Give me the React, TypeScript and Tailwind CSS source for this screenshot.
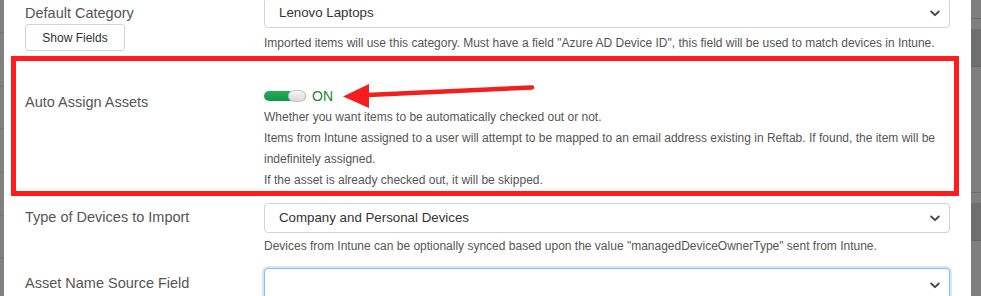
import React from "react";

const Chevron = () => (
  <svg width="10" height="7" viewBox="0 0 10 7" className="shrink-0">
    <path d="M1.2 1.5 L5 5.2 L8.8 1.5" fill="none" stroke="#444" strokeWidth="1.8" strokeLinecap="round" strokeLinejoin="round" />
  </svg>
);

const Select = ({ value, focus, className = "" }: { value: string; focus?: boolean; className?: string }) => (
  <div
    className={
      "flex items-center justify-between h-[30px] rounded-[4px] bg-white pl-[14px] pr-[9px] " +
      (focus
        ? "border border-[#80bdff] shadow-[0_0_0_2px_rgba(128,189,255,0.35)] "
        : "border border-[#cfd4da] ") +
      className
    }
  >
    <span className="text-[13.3px] text-[#333]">{value}</span>
    <Chevron />
  </div>
);

export default function App() {
  return (
    <div
      className="relative w-[981px] h-[296px] overflow-hidden bg-white flex"
      style={{ fontFamily: '"Liberation Sans", Arial, sans-serif' }}
    >
      {/* left overlay strip */}
      <div className="w-[4px] h-full bg-[#808080] flex flex-col shrink-0">
        <div className="h-[32px]" />
        <div className="h-[1px] bg-[#777]" />
        <div className="h-[52px]" />
        <div className="h-[1px] bg-[#777]" />
        <div className="h-[42px]" />
        <div className="h-[1px] bg-[#777]" />
        <div className="h-[43px]" />
        <div className="h-[1px] bg-[#777]" />
        <div className="h-[42px]" />
        <div className="h-[1px] bg-[#777]" />
        <div className="h-[42px]" />
        <div className="h-[1px] bg-[#777]" />
      </div>

      {/* modal body */}
      <div className="w-[967px] shrink-0 px-[21px] flex flex-col">
        {/* Row 1 */}
        <div className="flex mt-[-2px]">
          <div className="w-[239px] shrink-0 flex flex-col">
            <div className="text-[14.5px] text-[#555] h-[26px] flex items-center pt-[6px]">Default Category</div>
            <div className="mt-[0px] w-[100px] h-[27px] border border-[#d5d5d5] rounded-[3px] flex items-center justify-center text-[12px] text-[#333]">
              Show Fields
            </div>
          </div>
          <div className="flex-1 flex flex-col">
            <Select value="Lenovo Laptops" />
            <div className="text-[12px] text-[#555] mt-[8px] leading-[14px]">
              Imported items will use this category. Must have a field "Azure AD Device ID", this field will be used to match devices in Intune.
            </div>
          </div>
        </div>

        {/* Red box row */}
        <div className="relative ml-[-14px] mr-[-9px] mt-[5px] h-[140px] border-[5px] border-[#ff1c1c] pl-[9px] pr-[4px] flex">
          <div className="w-[239px] shrink-0 text-[14.5px] text-[#555] pt-[31px]">Auto Assign Assets</div>
          <div className="flex-1 flex flex-col pt-[29px]">
            <div className="flex items-center h-[12px]">
              <div className="relative w-[42px] h-[10px] rounded-full bg-gradient-to-b from-[#22b05a] to-[#14934a]">
                <div className="absolute right-0 top-[-1px] w-[18px] h-[12px] rounded-full bg-gradient-to-b from-[#f5f5f5] to-[#d9d9d9] border border-[#c8c8c8]" />
              </div>
              <span className="ml-[6px] text-[14px] text-[#118a2a] leading-[14px]">ON</span>
            </div>
            <div className="mt-[5px] text-[12px] text-[#555] leading-[21px]">
              <div>Whether you want items to be automatically checked out or not.</div>
              <div>Items from Intune assigned to a user will attempt to be mapped to an email address existing in Reftab. If found, the item will be</div>
              <div>indefinitely assigned.</div>
              <div>If the asset is already checked out, it will be skipped.</div>
            </div>
          </div>
        </div>

        {/* Row 3 */}
        <div className="flex mt-[7px]">
          <div className="w-[239px] shrink-0 text-[14.5px] text-[#555] h-[30px] flex items-center">Type of Devices to Import</div>
          <div className="flex-1 flex flex-col">
            <Select value="Company and Personal Devices" />
            <div className="text-[12px] text-[#555] mt-[6px] leading-[14px]">
              Devices from Intune can be optionally synced based upon the value "managedDeviceOwnerType" sent from Intune.
            </div>
          </div>
        </div>

        {/* Row 4 */}
        <div className="flex mt-[15px]">
          <div className="w-[239px] shrink-0 text-[14.5px] text-[#555] h-[32px] flex items-center">Asset Name Source Field</div>
          <div className="flex-1">
            <Select value="" focus className="h-[34px]" />
          </div>
        </div>
      </div>

      {/* right overlay strip */}
      <div className="flex-1 h-full bg-[#7f7f7f] flex flex-col">
        <div className="h-[18px]" />
        <div className="h-[1px] bg-[#6a6a6a]" />
        <div className="h-[10px]" />
        <div className="h-[38px] bg-[#6f6f6f] border-b border-[#666]" />
        <div className="h-[125px]" />
        <div className="h-[1px] bg-[#6a6a6a]" />
        <div className="h-[10px]" />
        <div className="h-[38px] bg-[#6f6f6f] border-b border-[#666]" />
      </div>

      {/* annotation arrow */}
      <svg className="absolute left-0 top-0 pointer-events-none" width="981" height="296">
        <path d="M532 87.5 L362 95.3" stroke="#f31f1f" strokeWidth="4.5" strokeLinecap="round" />
        <polygon points="343,96.5 369,84 369,108" fill="#f31f1f" />
      </svg>
    </div>
  );
}
